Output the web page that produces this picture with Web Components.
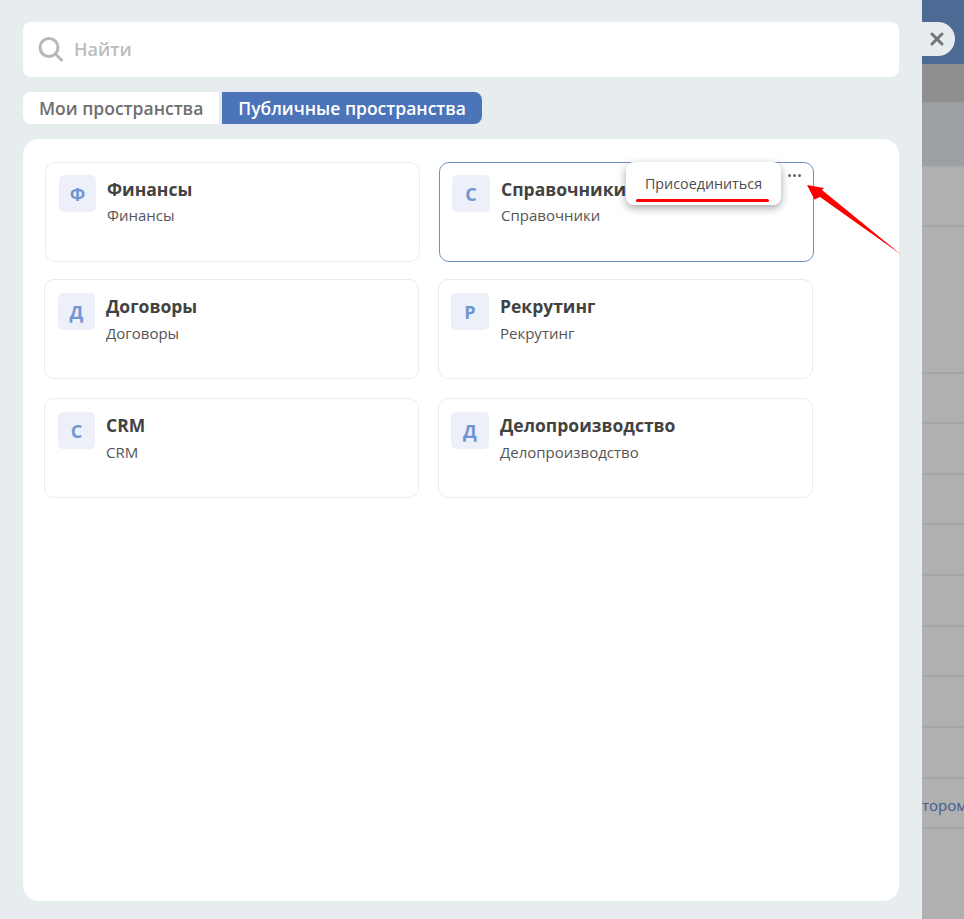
<!DOCTYPE html>
<html lang="ru">
<head>
<meta charset="utf-8">
<title>Пространства</title>
<style>
  html, body { margin: 0; height: 100%; }
  body { font-family: "Open Sans", sans-serif; overflow: hidden; }
</style>
</head>
<body>
<spaces-page>
  <search-box slot="search" placeholder="Найти"></search-box>
  <space-tab slot="tabs" first>Мои пространства</space-tab>
  <space-tab slot="tabs" active>Публичные пространства</space-tab>
  <space-card letter="Ф" title="Финансы" note="Финансы" shifted></space-card>
  <space-card letter="С" title="Справочники" note="Справочники" shifted open></space-card>
  <space-card letter="Д" title="Договоры" note="Договоры"></space-card>
  <space-card letter="Р" title="Рекрутинг" note="Рекрутинг"></space-card>
  <space-card letter="С" title="CRM" note="CRM"></space-card>
  <space-card letter="Д" title="Делопроизводство" note="Делопроизводство"></space-card>
</spaces-page>

<script>
/* eslint-disable require-jsdoc */
class SearchBox extends HTMLElement {
  connectedCallback() {
    this.attachShadow({mode: 'open'}).innerHTML = `
      <style>
        :host {
          display: flex;
          align-items: center;
          height: 55px;
          padding-left: 15px;
          gap: 11px;
          background: #fff;
          border-radius: 8px;
          font-size: 18px;
          font-weight: 600;
          color: #bcbcbc;
        }
        span { position: relative; top: -1px; }
        svg { display: block; flex: none; }
      </style>
      <svg width="25" height="25" viewBox="0 0 25 25" fill="none" stroke="#b8b8b8" stroke-width="3">
        <circle cx="11" cy="10.5" r="9"/>
        <path d="M17.5 17l6 6" stroke-linecap="round"/>
      </svg>
      <span>${this.getAttribute('placeholder')}</span>
    `;
  }
}

class SpaceTab extends HTMLElement {
  constructor() {
    super();
    this.attachShadow({mode: 'open'}).innerHTML = `
      <style>
        :host {
          display: flex;
          align-items: center;
          height: 32px;
          padding: 0 16px;
          font-size: 17.5px;
          font-weight: 600;
          color: #6f6f6f;
          background: #fff;
          white-space: nowrap;
        }
        :host([first]) { border-radius: 8px 0 0 8px; }
        :host([active]) {
          color: #fff;
          background: #4c74b9;
          border-radius: 0 8px 8px 0;
        }
      </style>
      <slot></slot>
    `;
  }
}

class SpaceCard extends HTMLElement {
  connectedCallback() {
    const open = this.hasAttribute('open');
    this.attachShadow({mode: 'open'}).innerHTML = `
      <style>
        :host {
          display: flex;
          box-sizing: border-box;
          position: relative;
          height: 100px;
          padding: 13px 12px 13px 13px;
          gap: 11px;
          background: #fff;
          border: 1px solid #e7ecef;
          border-radius: 10px;
        }
        :host(:nth-of-type(even)) { padding-left: 12px; }
        :host([shifted]) { margin: 2px -1px -2px 1px; padding-top: 12px; }
        :host([open]) { border-color: #6f8fc9; }
        .letter {
          flex: none;
          width: 37px;
          height: 37px;
          display: flex;
          align-items: center;
          justify-content: center;
          background: #edf0f8;
          border-radius: 5px;
          color: #6f95d2;
          font-size: 18px;
          font-weight: 700;
        }
        :host(:nth-of-type(even)) .letter { width: 38px; }
        .title {
          margin-top: 2px;
          font-size: 17.5px;
          line-height: 23px;
          font-weight: 700;
          color: #424242;
        }
        :host([shifted]) .title { margin-top: 3px; }
        .note {
          margin-top: 5px;
          font-size: 15px;
          line-height: 20px;
          color: #555;
        }
        :host([shifted]) .note { margin-top: 4px; }
        .dots {
          position: absolute;
          top: 11px;
          right: 12px;
          display: flex;
          gap: 2px;
        }
        .dots i { width: 3px; height: 3px; background: #666; border-radius: 50%; }
        .menu {
          position: absolute;
          top: -1px;
          left: 186px;
          width: 155px;
          height: 43px;
          box-sizing: border-box;
          padding-top: 13px;
          text-align: center;
          background: #fff;
          border-radius: 8px;
          box-shadow: 0 3px 8px rgba(0, 0, 0, .35);
          font-size: 14.3px;
          line-height: 18px;
          font-weight: 500;
          color: #4d4d4d;
        }
        .menu b {
          position: absolute;
          left: 10px;
          top: 37px;
          width: 133px;
          height: 3px;
          background: #f00;
          border-radius: 2px;
        }
      </style>
      <div class="letter">${this.getAttribute('letter')}</div>
      <div>
        <div class="title">${this.getAttribute('title')}</div>
        <div class="note">${this.getAttribute('note')}</div>
      </div>
      ${open ? '<div class="dots"><i></i><i></i><i></i></div><div class="menu">Присоединиться<b></b></div>' : ''}
    `;
  }
}

class BackdropPane extends HTMLElement {
  connectedCallback() {
    const rows = [
      [64, '#4d6a94'], [38, '#8f8f8f'], [65, '#9da0a2'], [60, '#b0b0b0'],
      [147, '#b0b0b0'], [50, '#b0b0b0'], [51, '#b0b0b0'], [50, '#b0b0b0'],
      [51, '#b0b0b0'], [51, '#b0b0b0'], [50, '#b0b0b0'], [51, '#b0b0b0'],
      [51, '#b0b0b0'], [50, '#b0b0b0', 'тором'], [90, '#b0b0b0'],
    ];
    const html = rows.map(([h, bg, text], i) => `
      <div class="row${i > 1 && i < rows.length - 1 ? ' line' : ''}${text ? ' text' : ''}" style="height:${h}px;background:${bg}">${text || ''}</div>
    `).join('');
    this.attachShadow({mode: 'open'}).innerHTML = `
      <style>
        :host { display: block; position: relative; overflow: hidden; }
        .row {
          box-sizing: border-box;
          display: flex;
          align-items: center;
          font-size: 15px;
          color: #3f5c8c;
          white-space: nowrap;
        }
        .line { border-bottom: 2px solid #a2a6a9; }
        .text { padding-top: 4px; }
        .close {
          position: absolute;
          top: 22px;
          left: 0;
          width: 33px;
          height: 34px;
          display: flex;
          align-items: center;
          justify-content: center;
          padding-right: 4px;
          box-sizing: border-box;
          background: #e7ecef;
          border-radius: 0 17px 17px 0;
        }
        svg { display: block; }
      </style>
      ${html}
      <div class="close">
        <svg width="14" height="14" viewBox="0 0 14 14" stroke="#757575" stroke-width="3" stroke-linecap="round">
          <path d="M2 2l10 10M12 2L2 12"/>
        </svg>
      </div>
    `;
  }
}

class SpacesPage extends HTMLElement {
  constructor() {
    super();
    this.attachShadow({mode: 'open'}).innerHTML = `
      <style>
        :host {
          display: grid;
          grid-template-columns: 922px 42px;
          position: relative;
          width: 964px;
          height: 919px;
          overflow: hidden;
        }
        .panel {
          display: flex;
          flex-direction: column;
          box-sizing: border-box;
          padding: 22px 23px 18px;
          background: #e7ecef;
        }
        .tabs { display: flex; gap: 3px; margin: 15px 0; align-self: flex-start; }
        .content {
          flex: 1;
          padding: 21px;
          background: #fff;
          border-radius: 16px;
        }
        .grid {
          display: grid;
          grid-template-columns: 375px 375px;
          grid-auto-rows: 100px;
          gap: 19px;
        }
        .arrow { position: absolute; left: 800px; top: 178px; }
      </style>
      <div class="panel">
        <slot name="search"></slot>
        <div class="tabs"><slot name="tabs"></slot></div>
        <div class="content"><div class="grid"><slot></slot></div></div>
      </div>
      <backdrop-pane></backdrop-pane>
      <svg class="arrow" width="104" height="80" viewBox="800 178 104 80">
        <path d="M807 185L824 188L822 190L901 254.5L820 197L814.5 199.5Z" fill="#f00"/>
      </svg>
    `;
  }
}

customElements.define('search-box', SearchBox);
customElements.define('space-tab', SpaceTab);
customElements.define('space-card', SpaceCard);
customElements.define('backdrop-pane', BackdropPane);
customElements.define('spaces-page', SpacesPage);
</script>
</body>
</html>
